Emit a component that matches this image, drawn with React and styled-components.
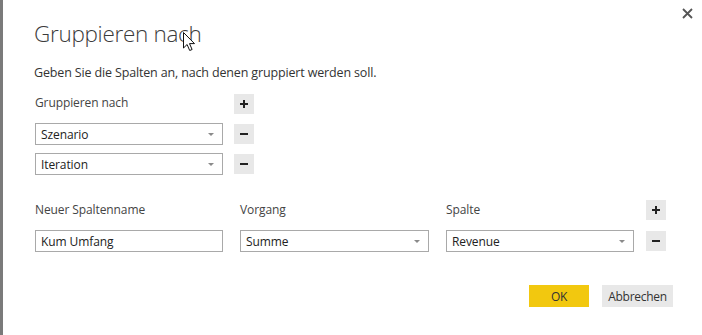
import styled, { createGlobalStyle } from 'styled-components'

const GlobalStyle = createGlobalStyle`
  html, body {
    margin: 0;
    padding: 0;
    background: #fff;
  }
  body {
    font-family: "Segoe UI", "Open Sans", "Noto Sans", sans-serif;
    color: #333;
  }
`;

const Page = styled.div`
  display: flex;
  width: 702px;
  height: 335px;
  overflow: hidden;
  background: #fff;
`;

const EdgeBar = styled.div`
  width: 3px;
  flex-shrink: 0;
  background: #7a7a7a;
`;

const Dialog = styled.div`
  position: relative;
  flex: 1;
  padding: 17px 0 0 31px;
  display: flex;
  flex-direction: column;
`;

const CloseButton = styled.button`
  position: absolute;
  top: 7px;
  right: 9px;
  width: 12px;
  height: 12px;
  padding: 0;
  border: none;
  background: none;
  display: flex;
  align-items: center;
  justify-content: center;
`;

const Title = styled.h1`
  position: relative;
  margin: 0;
  font-family: "Segoe UI Light", "Open Sans", sans-serif;
  font-weight: 300;
  font-size: 22.5px;
  line-height: 34px;
  color: #3c3c3c;
  letter-spacing: -0.3px;
`;

const Cursor = styled.svg`
  position: absolute;
  left: 149px;
  top: 15px;
`;

const Subtitle = styled.p`
  margin: 13px 0 0;
  font-size: 12.5px;
  line-height: 18px;
  color: #333;
  letter-spacing: -0.15px;
`;

const GroupGrid = styled.div`
  display: grid;
  grid-template-columns: 188px 20px;
  column-gap: 11px;
  row-gap: 8px;
  margin-top: 11px;
  margin-left: 1px;
  align-items: center;
  & > :first-child {
    margin-bottom: 2px;
  }
`;

const AggGrid = styled.div`
  display: grid;
  grid-template-columns: 188px 189px 188px 20px;
  column-gap: 17px;
  row-gap: 10px;
  margin-top: 25px;
  margin-left: 1px;
  align-items: center;
  & > :nth-child(4n) {
    margin-left: -5px;
  }
`;

const Label = styled.div`
  font-size: 12px;
  line-height: 20px;
  color: #444;
  letter-spacing: -0.1px;
`;

const IconButton = styled.button`
  width: 20px;
  height: 20px;
  padding: 0;
  border: none;
  background: #e8e8e8;
  display: flex;
  align-items: center;
  justify-content: center;
`;

const Field = styled.div`
  box-sizing: border-box;
  height: 22px;
  border: 1px solid #a9a9a9;
  background: #fff;
  display: flex;
  align-items: center;
  justify-content: space-between;
  padding: 0 8px 0 5px;
  font-size: 12px;
  color: #222;
  letter-spacing: -0.1px;
`;

const Caret = styled.span`
  width: 0;
  height: 0;
  border-left: 3px solid transparent;
  border-right: 3px solid transparent;
  border-top: 3px solid #8a8a8a;
`;

const Footer = styled.div`
  display: flex;
  gap: 13px;
  margin-top: 33px;
  padding-right: 29px;
  justify-content: flex-end;
`;

const ActionButton = styled.button`
  height: 22px;
  width: ${p => p.$primary ? '60px' : '71px'};
  padding: 0;
  border: none;
  background: ${p => p.$primary ? '#f2c80f' : '#e8e8e8'};
  font-family: "Segoe UI", "Open Sans", sans-serif;
  font-size: 12px;
  color: #333;
  letter-spacing: -0.3px;
`;

const Plus = () => (
  <svg width="10" height="10" viewBox="0 0 10 10">
    <path d="M5 1v8M1 5h8" stroke="#222" strokeWidth="2" />
  </svg>
);

const Minus = () => (
  <svg width="10" height="10" viewBox="0 0 10 10">
    <path d="M1 5h8" stroke="#222" strokeWidth="2" />
  </svg>
);

const Select = ({ value }) => (
  <Field>
    <span>{value}</span>
    <Caret />
  </Field>
);

const App = () => (
  <>
    <GlobalStyle />
    <Page>
      <EdgeBar />
      <Dialog>
        <CloseButton aria-label="Schließen">
          <svg width="11" height="11" viewBox="0 0 11 11">
            <path d="M1 1l9 9M10 1l-9 9" stroke="#555" strokeWidth="1.8" />
          </svg>
        </CloseButton>

        <Title>
          Gruppieren nach
          <Cursor width="13" height="19" viewBox="0 0 13 19">
            <path d="M0.5 0.5v15.5l3.6-3.5 2.6 6 2.4-1-2.6-5.9h5z" fill="#fff" stroke="#111" strokeWidth="1" strokeLinejoin="round" />
          </Cursor>
        </Title>

        <Subtitle>Geben Sie die Spalten an, nach denen gruppiert werden soll.</Subtitle>

        <GroupGrid>
          <Label>Gruppieren nach</Label>
          <IconButton><Plus /></IconButton>
          <Select value="Szenario" />
          <IconButton><Minus /></IconButton>
          <Select value="Iteration" />
          <IconButton><Minus /></IconButton>
        </GroupGrid>

        <AggGrid>
          <Label>Neuer Spaltenname</Label>
          <Label>Vorgang</Label>
          <Label>Spalte</Label>
          <IconButton><Plus /></IconButton>
          <Field>Kum Umfang</Field>
          <Select value="Summe" />
          <Select value="Revenue" />
          <IconButton><Minus /></IconButton>
        </AggGrid>

        <Footer>
          <ActionButton $primary>OK</ActionButton>
          <ActionButton>Abbrechen</ActionButton>
        </Footer>
      </Dialog>
    </Page>
  </>
);

export default App
